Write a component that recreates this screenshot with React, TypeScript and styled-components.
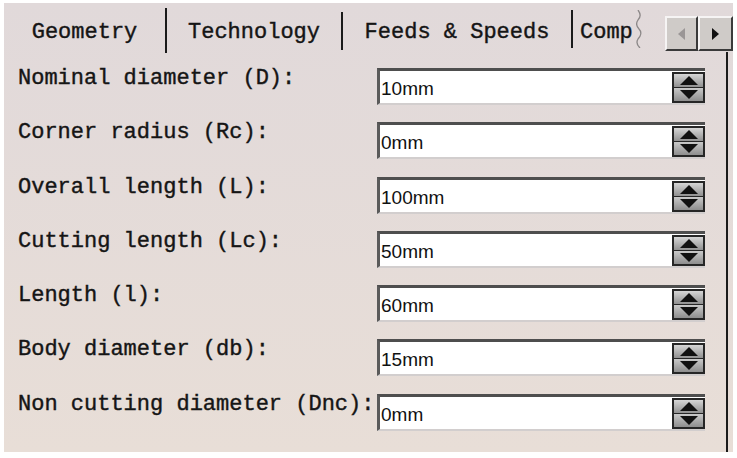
import React from 'react';
import styled, { createGlobalStyle } from 'styled-components';

const Global = createGlobalStyle`
  html, body { margin: 0; padding: 0; background: #ffffff; }
  body { width: 737px; height: 458px; overflow: hidden; }
`;

const Panel = styled.div`
  margin: 3px 0 0 4px;
  width: 729px;
  height: 449px;
  background: linear-gradient(#e1d9da, #e8ded7);
  display: flex;
  flex-direction: column;
  font-family: "Courier New", "Nimbus Mono PS", "FreeMono", "Liberation Mono", "DejaVu Sans Mono", monospace;
  color: #151515;
`;

const TabStrip = styled.div`
  display: flex;
  align-items: flex-start;
  height: 49px;
  flex-shrink: 0;
`;

const Tab = styled.div<{ $w: number; $left?: boolean }>`
  width: ${p => p.$w}px;
  height: 49px;
  box-sizing: border-box;
  padding-top: 9px;
  padding-left: ${p => (p.$left ? 7 : 0)}px;
  display: flex;
  align-items: center;
  justify-content: ${p => (p.$left ? 'flex-start' : 'center')};
  font-size: 22px;
  white-space: nowrap;
  overflow: hidden;
  -webkit-text-stroke: 0.4px #151515;
`;

const Sep = styled.div<{ $t: number; $h: number }>`
  width: 2px;
  margin-top: ${p => p.$t}px;
  height: ${p => p.$h}px;
  background: #1a1a1a;
  flex-shrink: 0;
`;

const Torn = styled.svg`
  margin-top: 7px;
  flex-shrink: 0;
`;

const Spacer = styled.div`
  flex: 1;
`;

const ScrollGroup = styled.div`
  display: flex;
  margin-top: 13px;
`;

const ScrollBtn = styled.div<{ $w: number }>`
  width: ${p => p.$w}px;
  height: 35px;
  box-sizing: border-box;
  background: #cfcbc8;
  border: 2px solid;
  border-color: #f6f4f4 #3a3a3a #3a3a3a #f6f4f4;
  display: flex;
  align-items: center;
  justify-content: center;
`;

const Content = styled.div`
  flex: 1;
  width: 724px;
  box-sizing: border-box;
  border-right: 2px solid #1b1b1b;
  padding: 16px 0 0 14px;
  display: flex;
  flex-direction: column;
  gap: 17.3px;
`;

const Row = styled.div`
  display: grid;
  grid-template-columns: 359px 328px;
  height: 37px;
`;

const Label = styled.div`
  font-size: 22px;
  line-height: 22px;
  white-space: pre;
  -webkit-text-stroke: 0.4px #151515;
`;

const Field = styled.div`
  display: flex;
  height: 37px;
  box-sizing: border-box;
  border-top: 3px solid #4e4e4e;
  border-left: 3px solid #5a5a5a;
  border-bottom: 2px solid #d2cece;
  background: #ffffff;
`;

const Value = styled.div`
  flex: 1;
  display: flex;
  align-items: center;
  padding: 4px 0 0 1px;
  font-family: "Liberation Sans Narrow", "Liberation Sans", Arial, sans-serif;
  font-size: 19px;
  color: #111;
`;

const Spinner = styled.div`
  width: 33px;
  height: 31px;
  margin-top: 1px;
  box-sizing: border-box;
  border: 2px solid #262626;
  display: flex;
  flex-direction: column;
  background: #262626;
`;

const SpinHalf = styled.div<{ $down?: boolean }>`
  flex: 1;
  display: flex;
  align-items: center;
  justify-content: center;
  background: ${p =>
    p.$down
      ? 'linear-gradient(#c9c9c9, #8e8e8e)'
      : 'linear-gradient(#d6d6d6, #909090)'};
  margin-top: ${p => (p.$down ? 1 : 0)}px;
`;

const rows: [string, string][] = [
  ['Nominal diameter (D):', '10mm'],
  ['Corner radius (Rc):', '0mm'],
  ['Overall length (L):', '100mm'],
  ['Cutting length (Lc):', '50mm'],
  ['Length (l):', '60mm'],
  ['Body diameter (db):', '15mm'],
  ['Non cutting diameter (Dnc):', '0mm'],
];

export default function App() {
  return (
    <>
      <Global />
      <Panel>
        <TabStrip>
          <Tab $w={161}>Geometry</Tab>
          <Sep $t={5} $h={45} />
          <Tab $w={174}>Technology</Tab>
          <Sep $t={9} $h={38} />
          <Tab $w={228}>Feeds &amp; Speeds</Tab>
          <Sep $t={7} $h={38} />
          <Tab $w={63} $left>Comp</Tab>
          <Torn width="7" height="38" viewBox="0 0 7 38">
            <path
              d="M2 0 C5 4 5 7 2 10 C0 13 0 16 3 19 C6 22 5 26 2 29 C0 32 1 35 4 38"
              fill="none"
              stroke="#8c8888"
              strokeWidth="1.3"
            />
          </Torn>
          <Spacer />
          <ScrollGroup>
            <ScrollBtn $w={33}>
              <svg width="7" height="12" viewBox="0 0 7 12">
                <polygon points="7,0 0,6 7,12" fill="#9a9696" />
              </svg>
            </ScrollBtn>
            <ScrollBtn $w={35}>
              <svg width="7" height="12" viewBox="0 0 7 12">
                <polygon points="0,0 7,6 0,12" fill="#111" />
              </svg>
            </ScrollBtn>
          </ScrollGroup>
        </TabStrip>
        <Content>
          {rows.map(([label, value]) => (
            <Row key={label}>
              <Label>{label}</Label>
              <Field>
                <Value>{value}</Value>
                <Spinner>
                  <SpinHalf>
                    <svg width="18" height="9" viewBox="0 0 18 9">
                      <polygon points="9,0 18,9 0,9" fill="#111" />
                    </svg>
                  </SpinHalf>
                  <SpinHalf $down>
                    <svg width="18" height="9" viewBox="0 0 18 9">
                      <polygon points="0,0 18,0 9,9" fill="#111" />
                    </svg>
                  </SpinHalf>
                </Spinner>
              </Field>
            </Row>
          ))}
        </Content>
      </Panel>
    </>
  );
}
